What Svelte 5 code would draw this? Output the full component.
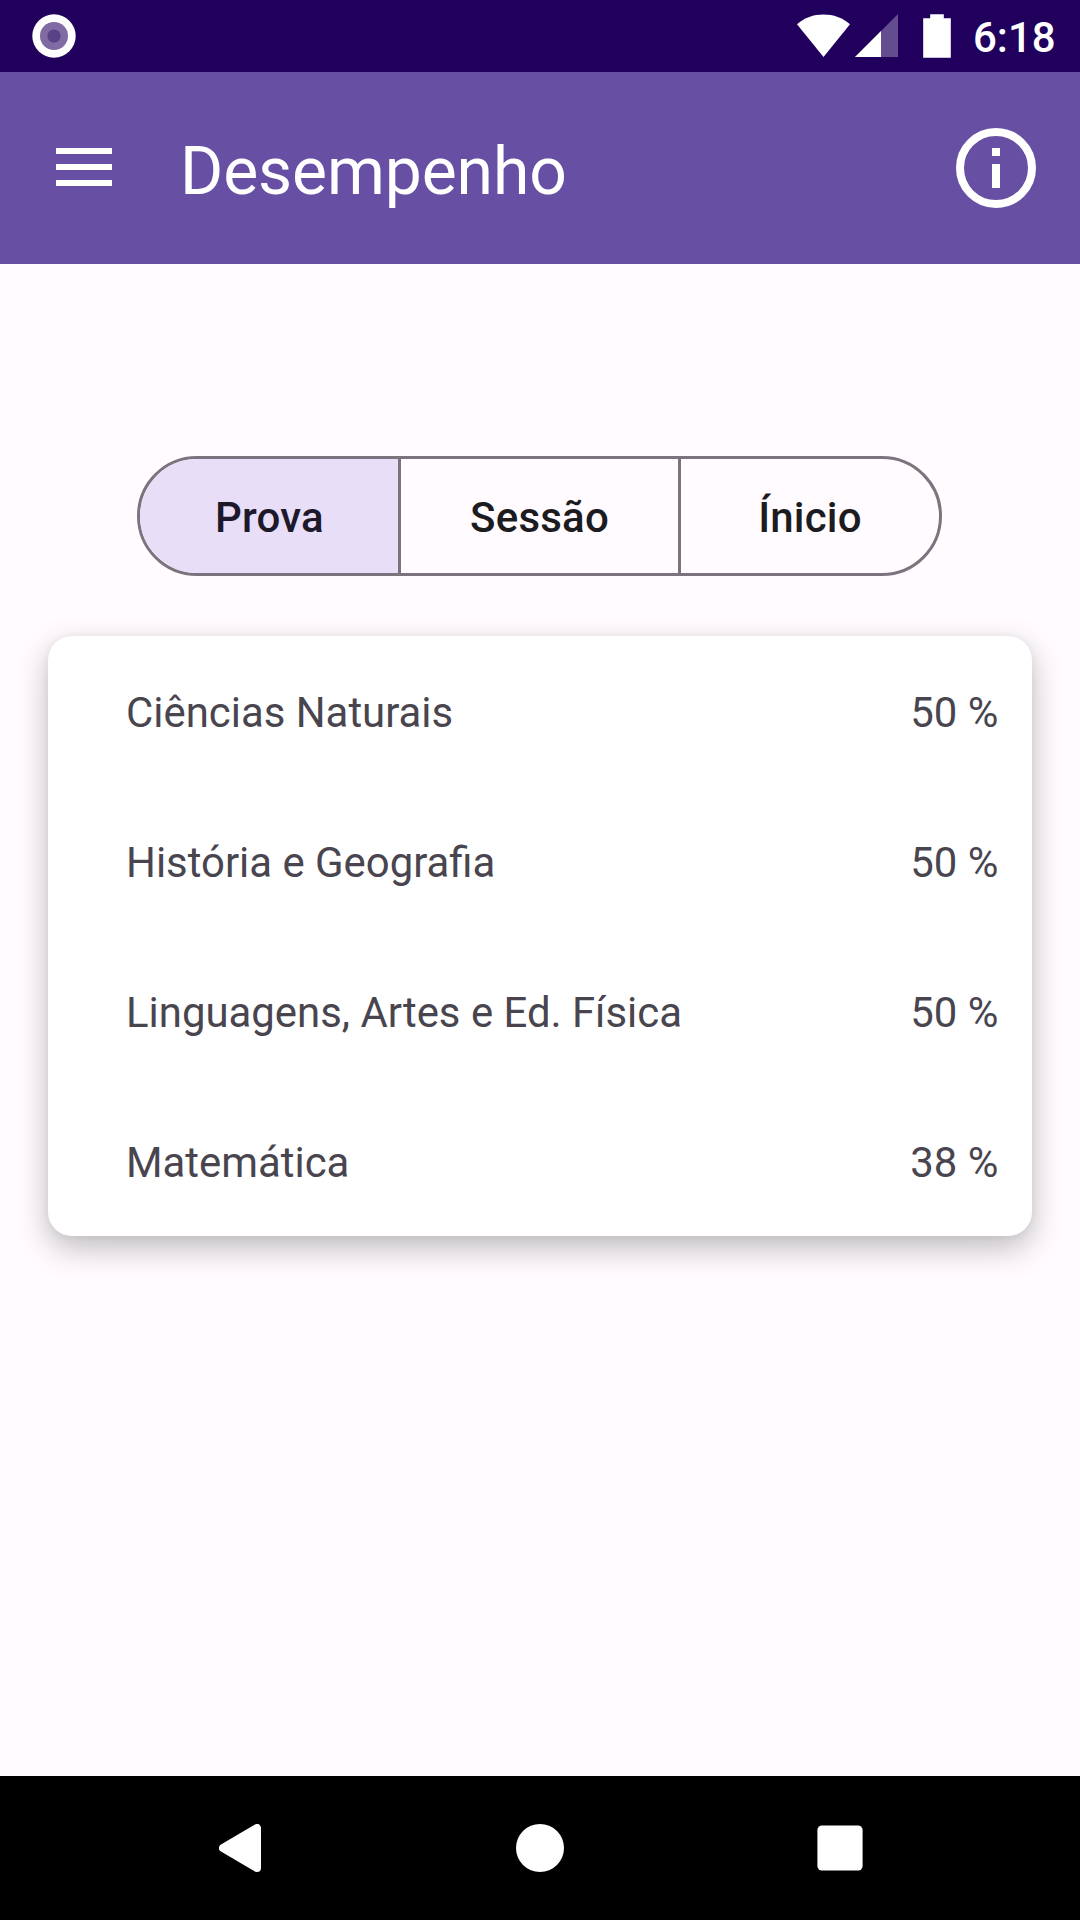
<script>
  const tabs = ['Prova', 'Sessão', 'Ínicio'];
  let selected = $state('Prova');

  const subjects = [
    { name: 'Ciências Naturais', score: 50 },
    { name: 'História e Geografia', score: 50 },
    { name: 'Linguagens, Artes e Ed. Física', score: 50 },
    { name: 'Matemática', score: 38 }
  ];
</script>

<div class="screen">
  <div class="status">
    <svg class="notice" width="44" height="44" viewBox="0 0 44 44">
      <circle cx="22" cy="22" r="21.7" fill="#fff" />
      <circle cx="22" cy="22" r="14" fill="#806ba3" />
      <circle cx="22" cy="22" r="6.6" fill="#5b4186" />
    </svg>
    <svg class="wifi" width="54" height="44" viewBox="0 0 54 44">
      <path d="M26.5 43 L0 10.2 C7.5 3.5 16.5 0.4 26.5 0.4 S45.5 3.5 53 10.2 Z" fill="#fff" />
    </svg>
    <svg class="signal" width="43" height="44" viewBox="0 0 43 44">
      <path d="M43 0 V43 H0 Z" fill="#fff" fill-opacity="0.3" />
      <path d="M26 17 V43 H0 Z" fill="#fff" />
    </svg>
    <svg class="battery" width="28" height="44" viewBox="0 0 28 44">
      <path d="M7.2 0.2 H20.8 V4.2 H27.8 V43.8 H0.2 V4.2 H7.2 Z" fill="#fff" />
    </svg>
    <span class="clock">6:18</span>
  </div>

  <header>
    <button class="menu" aria-label="Menu"><i></i><i></i><i></i></button>
    <h1>Desempenho</h1>
    <button class="info" aria-label="Info">
      <svg width="80" height="80" viewBox="0 0 80 80">
        <circle cx="40" cy="40" r="36" fill="none" stroke="#fff" stroke-width="8" />
        <path d="M36 20h8v8h-8z M36 36h8v24h-8z" fill="#fff" />
      </svg>
    </button>
  </header>

  <main>
    <div class="tabs">
      {#each tabs as tab}
        <button class="tab" class:active={tab === selected} onclick={() => (selected = tab)}>{tab}</button>
      {/each}
    </div>

    <section class="card">
      {#each subjects as s}
        <div class="row"><span>{s.name}</span><span>{s.score} %</span></div>
      {/each}
    </section>
  </main>

  <nav>
    <svg class="back" width="42" height="48" viewBox="0 0 42 48">
      <path d="M4 24 L38 4 V44 Z" fill="#fff" stroke="#fff" stroke-width="8" stroke-linejoin="round" />
    </svg>
    <svg class="home" width="48" height="48" viewBox="0 0 48 48"><circle cx="24" cy="24" r="24" fill="#fff" /></svg>
    <svg class="recent" width="46" height="46" viewBox="0 0 46 46"><rect x="0.4" y="0.4" width="45.2" height="45.2" rx="4.5" fill="#fff" /></svg>
  </nav>
</div>

<style>
  :global(body) {
    margin: 0;
  }
  .screen {
    width: 1080px;
    height: 1920px;
    display: flex;
    flex-direction: column;
    background: #fffbff;
    font-family: Roboto, 'Liberation Sans', sans-serif;
    overflow: hidden;
  }
  svg {
    display: block;
    flex: none;
  }
  button {
    border: 0;
    padding: 0;
    margin: 0;
    background: none;
    font: inherit;
    color: inherit;
  }
  .status {
    height: 72px;
    flex: none;
    box-sizing: border-box;
    display: flex;
    align-items: center;
    padding: 0 24px 0 32px;
    background: #21005d;
    color: #fff;
  }
  .wifi {
    margin-left: auto;
  }
  .signal {
    margin-left: 4px;
  }
  .battery {
    margin-left: 25px;
  }
  .clock {
    width: 83px;
    margin-left: 22px;
    font-size: 42px;
    font-weight: 500;
    line-height: 48px;
    padding-top: 3px;
    white-space: nowrap;
  }
  header {
    height: 192px;
    flex: none;
    box-sizing: border-box;
    display: flex;
    align-items: center;
    padding: 0 44px 0 56px;
    background: #6750a4;
    color: #fff;
  }
  .menu {
    width: 56px;
    height: 38px;
    display: flex;
    flex-direction: column;
    gap: 10px;
    margin-bottom: 2px;
  }
  .menu i {
    height: 6px;
    width: 56px;
    background: #fff;
  }
  h1 {
    margin: 0 0 0 68px;
    padding-top: 8px;
    font-size: 66px;
    font-weight: 400;
    line-height: 84px;
    letter-spacing: -0.1px;
  }
  .info {
    margin-left: auto;
  }
  main {
    flex: 1;
    display: flex;
    flex-direction: column;
    align-items: center;
    padding-top: 192px;
  }
  .tabs {
    width: 805px;
    height: 120px;
    margin-right: 1px;
    box-sizing: border-box;
    display: grid;
    grid-template-columns: 258px 280px 1fr;
    border: 3px solid #79747e;
    border-radius: 60px;
    overflow: hidden;
  }
  .tab {
    font-size: 42px;
    font-weight: 500;
    letter-spacing: 0.2px;
    color: #1c1b1f;
    padding-top: 3px;
  }
  .tab:first-child {
    padding-left: 1px;
  }
  .tab + .tab {
    border-left: 3px solid #79747e;
  }
  .tab.active {
    background: #e8def8;
    color: #1d192b;
  }
  .card {
    width: 984px;
    height: 600px;
    margin-top: 60px;
    border-radius: 24px;
    background: #fff;
    box-shadow:
      0 12px 32px rgba(0, 0, 0, 0.26),
      0 0 8px rgba(0, 0, 0, 0.05);
  }
  .row {
    height: 150px;
    box-sizing: border-box;
    display: flex;
    justify-content: space-between;
    align-items: center;
    padding: 3px 33.5px 0 78px;
    font-size: 41.9px;
    color: #49454f;
  }
  nav {
    height: 144px;
    flex: none;
    display: flex;
    align-items: center;
    background: #000;
  }
  .back {
    margin-left: 219px;
  }
  .home {
    margin-left: 255px;
  }
  .recent {
    margin-left: 253px;
  }
</style>
